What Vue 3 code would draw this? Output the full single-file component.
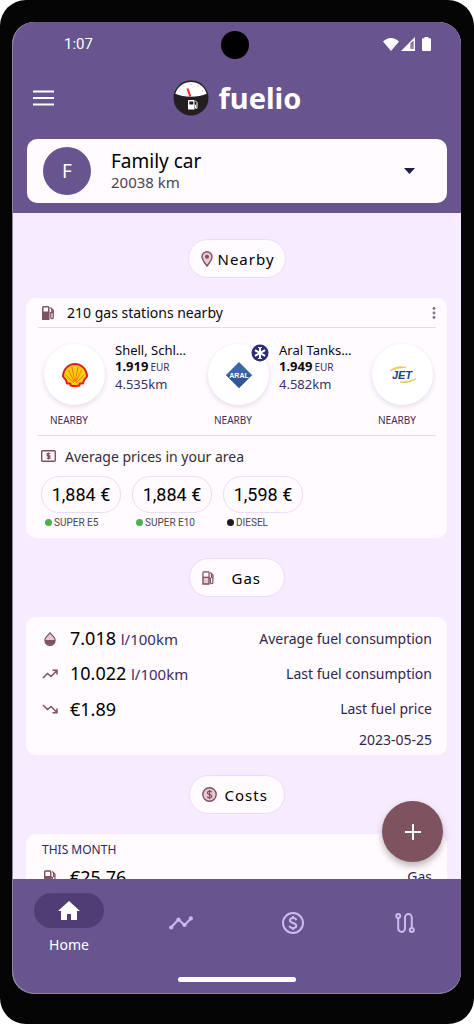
<template>
  <div class="phone">
    <div class="screen">
      <header class="top">
        <div class="status">
          <span class="time">1:07</span>
          <span class="camera"></span>
          <div class="status-icons">
            <svg width="16" height="13" viewBox="0 0 16 13"><path d="M8 13 0 3.600Q3.600 0 8 0t8 3.600z" fill="#fff" /></svg>
            <svg width="14" height="14" viewBox="0 0 14 14">
              <path d="M14 0v14H0z" fill="#fff" />
              <path d="M9.500 6.500 12.500 3.500v8.500h-3z" fill="#68548e" />
              <path d="M10.500 6.500h1v5.500h-1z" fill="#fff" opacity=".5" />
            </svg>
            <svg class="battery" width="9" height="14" viewBox="0 0 9 14"><path d="M2.500 0h4v1.300H8q1 0 1 1V13q0 1-1 1H1q-1 0-1-1V2.300q0-1 1-1h1.500z" fill="#fff" /></svg>
          </div>
        </div>

        <div class="appbar">
          <button class="menu" aria-label="Menu">
            <svg width="21" height="16" viewBox="0 0 21 16"><path d="M0 1.500h21M0 8h21M0 14.500h21" stroke="#fff" stroke-width="2" /></svg>
          </button>
          <div class="brand">
            <svg width="36" height="36" viewBox="0 0 36 36">
              <circle cx="18" cy="18" r="17.500" fill="#231f20" />
              <path d="M2.300 13.800a16.300 16.300 0 0 1 31.400 0Q27 16.800 18 16.800T2.300 13.800z" fill="#fff" />
              <path d="M6 10.500l1 .7M10.500 5.500l.7 1M18 3.500v1.300M25.500 5.500l-.7 1M30 10.500l-1 .7" stroke="#999" stroke-width=".8" />
              <path d="m14.500 8.500 2.800 8.200" stroke="#ef3340" stroke-width="2.200" />
              <path d="M15 29.500V21q0-1 1-1h4.500q1 0 1 1v8.500z" fill="#fff" />
              <path d="M16.300 21.500h4v3h-4z" fill="#231f20" />
              <path d="M21.500 25h1v3.200h1.500v-5.700L22 20.500" fill="none" stroke="#fff" />
            </svg>
            <h1>fuelio</h1>
          </div>
        </div>

        <button class="car" aria-haspopup="listbox">
          <span class="avatar">F</span>
          <span class="car-text">
            <span class="car-name">Family car</span>
            <span class="car-km">20038 km</span>
          </span>
          <svg width="11" height="6" viewBox="0 0 11 6"><path d="M0 0h11L5.500 6z" fill="#211a4b" /></svg>
        </button>
      </header>

      <div class="body">
        <main class="content">
          <h2 class="pill nearby">
            <svg width="12" height="16" viewBox="0 0 12 16">
              <path d="M6 15C3.500 11.700 1 8.800 1 5.800a5 5 0 0 1 10 0c0 3-2.500 5.900-5 9.200z" fill="#eac8d2" stroke="#7e525f" stroke-width="1.400" />
              <circle cx="6" cy="5.700" r="2" fill="#7e525f" />
            </svg>
            <span>Nearby</span>
          </h2>

          <section class="card stations-card">
            <div class="card-head">
              <svg width="13" height="14" viewBox="0 0 13 14">
                <path d="M0 14V1.500Q0 0 1.500 0h4.500Q7.500 0 7.500 1.500V14z" fill="#7e525f" />
                <path d="M1.500 1.500H6v4H1.500z" fill="#fff" />
                <path d="M7.500 7h1.300v4.500q0 1.200 1.200 1.200t1.200-1.200V6M8.300 1.500l3 2.700V6.500H9.800V3" fill="none" stroke="#7e525f" stroke-width="1.300" />
              </svg>
              <span class="head-title">210 gas stations nearby</span>
              <button class="more" aria-label="More options">
                <svg width="4" height="12" viewBox="0 0 4 12" fill="#7b7582"><circle cx="2" cy="1.500" r="1.400" /><circle cx="2" cy="6" r="1.400" /><circle cx="2" cy="10.500" r="1.400" /></svg>
              </button>
            </div>

            <div class="stations">
              <article v-for="s in stations" :key="s.brand" class="station">
                <div class="logo">
                  <svg v-if="s.brand === 'shell'" width="26" height="24" viewBox="0 0 26 24">
                    <path d="M8.500 22.500 8.300 20.500H5L4.200 17.500 1 13.500C1 6.500 6.500 1 13 1s12 5.500 12 12.500l-3.200 4-.8 3h-3.300l-.2 2-3 .5h-3z" fill="#fbce07" stroke="#dd1d21" stroke-width="2" stroke-linejoin="round" />
                    <path d="M12 20 4 12M12.300 19 6.500 7M12.600 18 10 4M13.400 18 16 4M13.700 19 19.500 7M14 20l8-8" stroke="#e8642a" stroke-width=".8" />
                  </svg>
                  <svg v-else-if="s.brand === 'aral'" width="26" height="26" viewBox="0 0 26 26">
                    <path d="M13 0 26 13 13 26 0 13z" fill="#3b67a8" />
                    <path d="M0 13h26L13 26z" fill="#2f5796" />
                    <text x="13" y="15.500" class="aral-text">ARAL</text>
                  </svg>
                  <svg v-else width="28" height="18" viewBox="0 0 28 18">
                    <path d="M1 5C5 1 12 0 17 1.500 11 1.500 6 2.500 1 5zM27 12.500c-4 3.500-11 5-16 3.500 6 0 11-1 16-3.500z" fill="#e8c84a" stroke="#e8c84a" stroke-width=".8" />
                    <text x="13" y="13" class="jet-text">JET</text>
                  </svg>
                  <svg v-if="s.badge" class="badge" width="18" height="18" viewBox="0 0 18 18">
                    <circle cx="9" cy="9" r="8.500" fill="#2e2a78" />
                    <path d="M9 3.200v11.600M3.900 6.100l10.200 5.800M14.100 6.100 3.900 11.900" stroke="#fff" stroke-width="2" />
                    <path d="M7 3l2 2 2-2M7 15l2-2 2 2" fill="none" stroke="#fff" />
                  </svg>
                </div>
                <div v-if="s.name" class="info">
                  <span class="name">{{ s.name }}</span>
                  <span class="price"><b>{{ s.price }}</b><small>EUR</small></span>
                  <span class="distance">{{ s.distance }}</span>
                </div>
                <span class="tag">NEARBY</span>
              </article>
            </div>

            <div class="average">
              <svg width="15" height="12" viewBox="0 0 15 12">
                <rect x=".7" y=".7" width="13.600" height="10.600" rx="1" fill="#fff8fa" stroke="#7e525f" stroke-width="1.400" />
                <path d="M9.300 3.500H6.200v2.400h2.600v2.500H5.700M7.500 2.500v7" fill="none" stroke="#7e525f" stroke-width="1.200" />
              </svg>
              <span>Average prices in your area</span>
            </div>

            <ul class="prices">
              <li v-for="p in prices" :key="p.fuel">
                <button class="chip">{{ p.value }}</button>
                <span class="fuel"><i class="dot" :class="p.color"></i>{{ p.fuel }}</span>
              </li>
            </ul>
          </section>

          <h2 class="pill gas">
            <svg width="13" height="14" viewBox="0 0 13 14">
              <path d="M1 13V1.700Q1 1 1.700 1h4.600Q7 1 7 1.700V13z" fill="#eac8d2" stroke="#7e525f" stroke-width="1.400" />
              <path d="M1.700 1.700h4.600v4H1.700z" fill="#fff" />
              <path d="M1 6.300h6M7 7.300h1.500v4.200q0 1.100 1.200 1.100t1.200-1.100V6M8.300 1.500l2.700 2.700V6.500H9.500V3" fill="none" stroke="#7e525f" stroke-width="1.200" />
            </svg>
            <span>Gas</span>
          </h2>

          <section class="card gas-card">
            <div class="row">
              <svg width="16" height="14" viewBox="0 0 16 14">
                <path d="M8 .8 4.300 4.900a5.100 5.100 0 1 0 7.400 0z" fill="#eac8d2" stroke="#7e525f" stroke-width="1.200" />
                <path d="M2.900 8h10.200a5.100 5.100 0 0 1-10.200 0z" fill="#7e525f" />
              </svg>
              <span class="value">7.018 <small>l/100km</small></span>
              <span class="label">Average fuel consumption</span>
            </div>
            <div class="row">
              <svg width="16" height="10" viewBox="0 0 16 10"><path d="m1 9 4.500-4.500 3.500 3L14.500 2M10.500 1.200H15V5.500" fill="none" stroke="#7e525f" stroke-width="1.500" /></svg>
              <span class="value">10.022 <small>l/100km</small></span>
              <span class="label">Last fuel consumption</span>
            </div>
            <div class="row">
              <svg width="16" height="10" viewBox="0 0 16 10"><path d="m1 1 4.500 4.500 3.500-3L14.500 8M10.500 8.800H15V4.500" fill="none" stroke="#7e525f" stroke-width="1.500" /></svg>
              <span class="value">€1.89</span>
              <span class="label">Last fuel price</span>
            </div>
            <div class="date">2023-05-25</div>
          </section>

          <h2 class="pill costs">
            <svg width="15" height="15" viewBox="0 0 15 15">
              <circle cx="7.500" cy="7.500" r="6.700" fill="#eac8d2" stroke="#7e525f" stroke-width="1.400" />
              <path d="M9.700 5.300Q9.300 4.200 7.500 4.200T5.400 5.700q0 1.300 2.100 1.700t2.200 1.900q0 1.500-2.200 1.500T5.200 9.500M7.500 3v9" fill="none" stroke="#7e525f" stroke-width="1.200" />
            </svg>
            <span>Costs</span>
          </h2>

          <section class="card costs-card">
            <h3>THIS MONTH</h3>
            <div class="row">
              <svg width="16" height="14" viewBox="0 0 16 14">
                <path d="M2.700 13V1.700Q2.700 1 3.400 1H8q.7 0 .7.700V13z" fill="#fff" stroke="#7e525f" stroke-width="1.400" />
                <path d="M2 6h7.400v8H2z" fill="#7e525f" />
                <path d="M9 7.300h1.500v4.200q0 1.100 1.200 1.100t1.200-1.100V6M10.300 1.500 13 4.200V6.500h-1.500V3" fill="none" stroke="#7e525f" stroke-width="1.200" />
              </svg>
              <span class="value">€25.76</span>
              <span class="label">Gas</span>
            </div>
          </section>
        </main>

        <button class="fab" aria-label="Add">
          <svg width="16" height="16" viewBox="0 0 16 16"><path d="M8 0v16M0 8h16" stroke="#fff" stroke-width="2" /></svg>
        </button>
      </div>

      <nav class="bottom">
        <div class="tabs">
          <a href="#home" class="tab active">
            <span class="indicator">
              <svg width="22" height="19" viewBox="0 0 22 19"><path d="M11 0 0 10h3v9h6v-6h4v6h6v-9h3z" fill="#fff" /></svg>
            </span>
            Home
          </a>
          <a href="#stats" class="tab" aria-label="Statistics">
            <svg width="24" height="14" viewBox="0 0 24 14" fill="#cdb9f0">
              <path d="m2 11.500 7.500-8L15.500 9 22 2.500" fill="none" stroke="#cdb9f0" stroke-width="2" />
              <circle cx="2.200" cy="11.500" r="2.100" /><circle cx="9.500" cy="3.600" r="2.100" /><circle cx="15.500" cy="9" r="2.100" /><circle cx="21.800" cy="2.400" r="2.100" />
            </svg>
          </a>
          <a href="#costs" class="tab" aria-label="Costs">
            <svg width="22" height="22" viewBox="0 0 22 22" fill="none" stroke="#cdb9f0" stroke-width="2">
              <circle cx="11" cy="11" r="10" />
              <path d="M14.300 8.200Q13.800 6 11 6T7.900 8.300q0 1.900 3.100 2.600t3.300 2.800Q14.300 16 11 16t-3.400-2.300M11 4v2M11 16v2" />
            </svg>
          </a>
          <a href="#trips" class="tab" aria-label="Trips">
            <svg width="20" height="20" viewBox="0 0 20 20" fill="none" stroke="#cdb9f0" stroke-width="2">
              <circle cx="3.200" cy="3" r="2" /><circle cx="16.800" cy="17" r="2" />
              <path d="M3.200 5v10.500a3.400 3.400 0 0 0 6.800 0v-11a3.400 3.400 0 0 1 6.800 0V15" />
            </svg>
          </a>
        </div>
        <span class="gesture"></span>
      </nav>
    </div>
  </div>
</template>

<script setup>
const stations = [
  { brand: 'shell', name: 'Shell, Schl…', price: '1.919', distance: '4.535km' },
  { brand: 'aral', name: 'Aral Tanks…', price: '1.949', distance: '4.582km', badge: true },
  { brand: 'jet' },
]

const prices = [
  { value: '1,884 €', fuel: 'SUPER E5', color: 'green' },
  { value: '1,884 €', fuel: 'SUPER E10', color: 'green' },
  { value: '1,598 €', fuel: 'DIESEL', color: 'black' },
]
</script>

<style>
body {
  margin: 0;
  background: #fff;
}
</style>

<style scoped>
* {
  box-sizing: border-box;
}
svg {
  display: block;
  flex: none;
}
button {
  border: 0;
  padding: 0;
  background: none;
  font: inherit;
  color: inherit;
  cursor: pointer;
}
.phone {
  height: 100vh;
  padding: 22px 13px 30px 12px;
  background: #050505;
  border-radius: 26px;
  font-family: "Noto Sans", "Open Sans", sans-serif;
  font-size: 14px;
  color: #0b080f;
}
.screen {
  height: 100%;
  display: flex;
  flex-direction: column;
  overflow: hidden;
  border-radius: 22px;
  border: 1px solid #8d8798;
  border-width: 0 0 1px 1px;
  background: #f6ecfe;
}

/* header */
.top {
  flex: none;
  padding-bottom: 10px;
  background: #68548e;
  color: #fff;
}
.status {
  display: grid;
  grid-template-columns: 1fr 28px 1fr;
  align-items: center;
  height: 44px;
  padding: 0 30px 0 51px;
}
.time {
  font-family: Roboto, sans-serif;
  font-size: 15px;
}
.camera {
  position: absolute;
  left: 50%;
  top: 31px;
  width: 28px;
  height: 28px;
  margin-left: -16px;
  border-radius: 50%;
  background: #000;
}
.status-icons {
  grid-column: 3;
  display: flex;
  justify-content: flex-end;
  align-items: center;
  gap: 2px;
}
.battery {
  margin-left: 5px;
}
.appbar {
  display: grid;
  grid-template-columns: 1fr auto 1fr;
  align-items: center;
  height: 64px;
  padding: 0 20px;
}
.brand {
  display: flex;
  align-items: center;
  gap: 10px;
}
.menu {
  justify-self: start;
}
.brand h1 {
  margin: 0;
  font-size: 29px;
  line-height: 36px;
}
.car {
  display: flex;
  align-items: center;
  width: calc(100% - 28px);
  height: 64px;
  margin: 9px 14px 0;
  padding: 0 32px 0 16px;
  border-radius: 10px;
  background: #fffbff;
  text-align: left;
}
.avatar {
  width: 48px;
  height: 48px;
  border-radius: 50%;
  background: #68548e;
  color: #fff;
  font-size: 19px;
  line-height: 48px;
  text-align: center;
}
.car-text {
  display: flex;
  flex-direction: column;
  flex: 1;
  margin-left: 20px;
}
.car-name {
  font-size: 19px;
  line-height: 22px;
  color: #000;
}
.car-km {
  font-size: 15px;
  line-height: 20px;
  color: #49454e;
}

/* content */
.body {
  position: relative;
  flex: 1;
  min-height: 0;
}
.content {
  height: 100%;
  overflow: hidden;
  padding: 26px 14px 0 13px;
}
.pill {
  display: flex;
  align-items: center;
  width: 96px;
  height: 39px;
  margin: 0 auto;
  padding: 0 12px;
  border: 1px solid #e8def8;
  border-radius: 20px;
  background: #fffbff;
  font-size: 15px;
  font-weight: 400;
  letter-spacing: 1px;
  color: #000;
}
.nearby {
  width: 98px;
  gap: 5px;
}
.gas {
  gap: 17px;
}
.costs {
  gap: 8px;
}
.card {
  margin: 20px 0;
  border-radius: 10px;
  background: #fffbff;
}
.stations-card {
  padding: 0 11px 7px 12px;
}
.card-head {
  display: flex;
  align-items: center;
  height: 30px;
  padding-left: 4px;
  border-bottom: 1px solid #e3dbed;
}
.head-title {
  flex: 1;
  margin-left: 12px;
}
.stations {
  display: flex;
  overflow: hidden;
  height: 108px;
  padding: 16px 0 0 6px;
  border-bottom: 1px solid #e3dbed;
}
.station {
  flex: none;
  display: grid;
  grid-template-columns: 61px 93px;
  column-gap: 10px;
  grid-template-rows: 61px 26px;
}
.logo {
  position: relative;
  display: grid;
  place-items: center;
  height: 61px;
  border-radius: 50%;
  background: #fff;
  box-shadow: 0 2px 5px #e2dcea;
}
.badge {
  position: absolute;
  top: 0;
  right: 0;
}
.aral-text {
  font: bold 7px "Liberation Sans", sans-serif;
  fill: #fff;
  text-anchor: middle;
}
.jet-text {
  font: italic bold 11px "Liberation Sans", sans-serif;
  fill: #20457e;
  text-anchor: middle;
}
.info {
  display: flex;
  flex-direction: column;
  font-size: 13px;
  line-height: 17px;
  margin-top: -2px;
}
.name {
  line-height: 16px;
  white-space: nowrap;
}
.price small {
  margin-left: 2px;
  font-size: 10px;
  color: #3c2f63;
}
.distance {
  color: #3c2f63;
}
.tag {
  grid-column: 1;
  grid-row: 2;
  align-self: center;
  margin: 4px 0 0 6px;
  font-size: 10px;
  line-height: 14px;
  color: #3c2f63;
}
.average {
  display: flex;
  align-items: center;
  gap: 9px;
  height: 40px;
  padding-left: 3px;
  color: #322f38;
}
.prices {
  display: flex;
  gap: 11px;
  margin: 0;
  padding: 0 0 0 3px;
  list-style: none;
  font-family: Roboto, sans-serif;
}
.chip {
  display: block;
  width: 80px;
  height: 37px;
  border: 1px solid #e8def8;
  border-radius: 18px;
  font-size: 18px;
  color: #000;
}
.fuel {
  display: flex;
  align-items: center;
  gap: 2px;
  height: 18px;
  padding-left: 4px;
  font-size: 10px;
  color: #49454e;
}
.dot {
  width: 7px;
  height: 7px;
  border-radius: 50%;
}
.green {
  background: #4caf50;
}
.black {
  background: #1c1b1f;
}

.gas-card {
  padding: 4px 15px 0 16px;
}
.row {
  display: flex;
  align-items: center;
  height: 35px;
}
.value {
  flex: 1;
  margin-left: 12px;
  font-size: 18px;
  line-height: 24px;
  color: #000;
}
.value small {
  font-size: 15px;
  color: #3c2f63;
}
.label,
.date {
  color: #2f2752;
}
.date {
  height: 29px;
  line-height: 28px;
  text-align: right;
}
.costs-card {
  padding: 7px 15px 0 16px;
}
.costs-card h3 {
  margin: 0;
  font-size: 12px;
  font-weight: 400;
  line-height: 18px;
  color: #2f2752;
}
.fab {
  position: absolute;
  right: 18px;
  bottom: 17px;
  display: grid;
  place-items: center;
  width: 61px;
  height: 61px;
  border-radius: 50%;
  background: #7e525f;
  box-shadow: 0 4px 7px rgba(0, 0, 0, 0.28);
}

/* bottom navigation */
.bottom {
  flex: none;
  height: 114px;
  background: #68548e;
}
.tabs {
  display: grid;
  grid-template-columns: repeat(4, 1fr);
  height: 88px;
}
.tab {
  display: flex;
  align-items: center;
  justify-content: center;
  color: #fff;
  text-decoration: none;
}
.active {
  flex-direction: column;
  justify-content: flex-start;
  padding-top: 14px;
  line-height: 34px;
}
.indicator {
  display: grid;
  place-items: center;
  width: 70px;
  height: 35px;
  border-radius: 18px;
  background: #513d76;
}
.gesture {
  display: block;
  width: 118px;
  height: 5px;
  margin: 10px auto 0;
  border-radius: 3px;
  background: #fff;
}
</style>
